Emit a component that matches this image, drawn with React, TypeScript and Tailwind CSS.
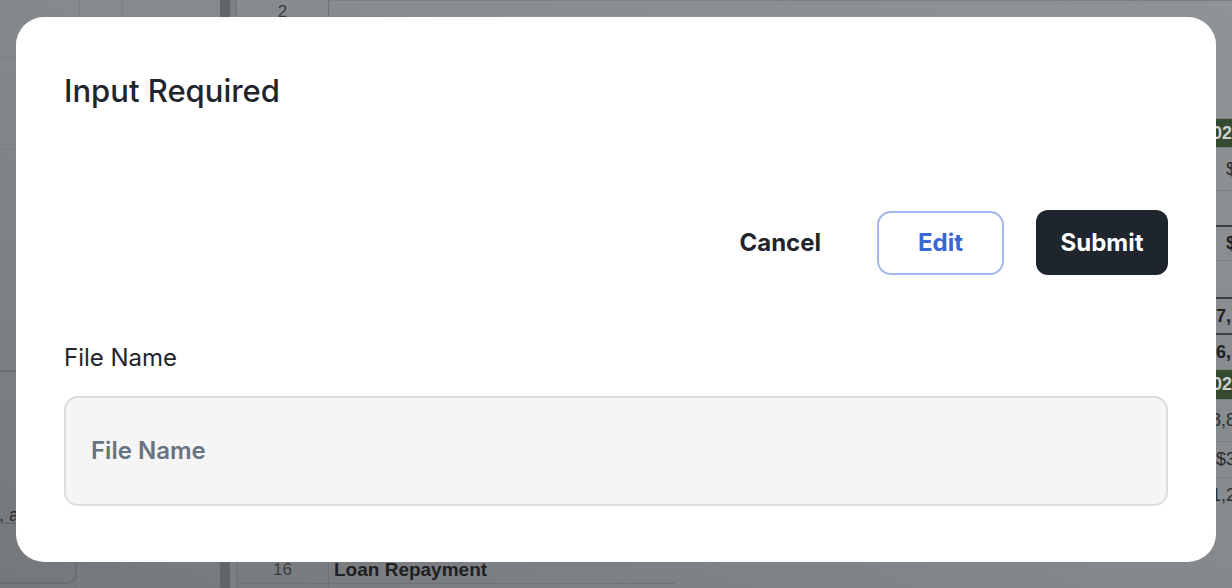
import React from "react";

const font = { fontFamily: "Inter, 'Noto Sans', sans-serif" };

function RightCells() {
  const rows: { h: number; text?: string; kind?: "green" | "bold" | "normal"; topLine?: boolean }[] = [
    { h: 118 },
    { h: 29, text: "2024", kind: "green" },
    { h: 43, text: "$", kind: "normal" },
    { h: 35 },
    { h: 35, text: "$", kind: "bold", topLine: true },
    { h: 37 },
    { h: 36, text: "17,", kind: "bold", topLine: true },
    { h: 36, text: "16,", kind: "bold", topLine: true },
    { h: 30, text: "2025", kind: "green" },
    { h: 42, text: "$8,8", kind: "normal" },
    { h: 36, text: "$3", kind: "normal" },
    { h: 35, text: "$1,2", kind: "normal" },
  ];
  return (
    <div className="flex flex-col w-full">
      {rows.map((r, i) => (
        <div
          key={i}
          className={`flex justify-end w-full ${r.topLine ? "border-t-2 border-[#3c3f42]" : "border-t border-[#7d8083]"}`}
          style={{ height: r.h }}
        >
          <div
            className={`w-[40px] flex items-center justify-end overflow-hidden whitespace-nowrap text-[18px] ${
              r.kind === "green"
                ? "bg-[#364a32] text-[#cfd2d4] font-bold"
                : r.kind === "bold"
                ? "text-[#1f2123] font-bold"
                : "text-[#2a2c2e]"
            }`}
            style={{ fontFamily: "'Liberation Sans', Arial, sans-serif" }}
          >
            <span className={r.kind === "green" ? "mr-[-10px]" : r.kind === "bold" && r.text !== "$" ? "mr-[1px]" : "mr-[-4px]"}>{r.text}</span>
          </div>
        </div>
      ))}
    </div>
  );
}

export default function App() {
  return (
    <div className="relative w-[1232px] h-[588px] overflow-hidden bg-gradient-to-tr from-[#75787b] via-[#86898c] to-[#909396]" style={font}>
      {/* Background spreadsheet (dimmed) */}
      <div className="flex h-full">
        <div className="w-[80px] h-full flex flex-col border-r border-[#7c7f82]">
          <div className="h-[58px] border-b border-[#7c7f82]" />
          <div className="h-[92px] border-b border-[#7c7f82]" />
          <div className="h-[42px] border-b border-[#7c7f82]" />
          <div className="h-[180px] border-b-2 border-[#6d7073]" />
          <div className="flex-1 relative">
            <div className="text-[18px] text-[#2b2d30] mt-[130px] -ml-[10px] whitespace-nowrap" style={{ fontFamily: "'Liberation Sans', Arial, sans-serif" }}>s, a</div>
            <div className="absolute left-[-10px] right-[2px] top-[150px] bottom-[4px] border-2 border-[#6b6e71] rounded-br-[10px]" />
          </div>
        </div>
        <div className="w-[43px] h-full border-r border-[#7c7f82]" />
        <div className="w-[97px] h-full" />
        <div className="w-[10px] h-full bg-[#626568]" />
        <div className="w-[6px] h-full bg-[#7d8083]" />
        <div className="w-[93px] h-full border-l border-r border-[#6f7275] flex flex-col text-[#3a3c3f] text-[17px]" style={{ fontFamily: "'Liberation Sans', Arial, sans-serif" }}>
          <div className="h-[24px] flex items-center justify-center">2</div>
          <div className="flex-1" />
          <div className="h-[28px] flex items-start justify-center pt-[1px] border-b border-[#6f7275] mb-[4px]">16</div>
        </div>
        <div className="flex-1 h-full flex flex-col">
          <RightCells />
          <div className="flex-1" />
          <div className="h-[32px] flex flex-col">
            <div className="w-[346px] border-b border-[#6f7275] h-[28px] pl-[5px] text-[19px] font-bold text-[#1e2022]" style={{ fontFamily: "'Liberation Sans', Arial, sans-serif" }}>
              Loan Repayment
            </div>
          </div>
        </div>
      </div>

      {/* Modal */}
      <div className="absolute left-[16px] top-[17px] w-[1200px] h-[545px] bg-white rounded-[28px] px-[48px] pt-[54px] flex flex-col">
        <h2 className="text-[31px] leading-[40px] font-medium text-[#1f252d]">Input Required</h2>
        <div className="flex justify-end items-center mt-[99px] gap-[32px]">
          <button className="h-[65px] px-[24px] text-[24px] font-bold text-[#1f252d]">Cancel</button>
          <button className="h-[64px] w-[127px] rounded-[14px] border-2 border-[#a3b8ea] text-[24px] font-bold text-[#3a67d2]">Edit</button>
          <button className="h-[65px] w-[132px] rounded-[12px] bg-[#1f252d] text-[24px] font-bold text-white">Submit</button>
        </div>
        <label className="mt-[68px] text-[24px] leading-[30px] text-[#1f252d]">File Name</label>
        <div className="mt-[23px] h-[110px] rounded-[14px] border-2 border-[#d9dce0] bg-[#f5f5f5] flex items-center px-[25px]">
          <span className="text-[24px] font-semibold text-[#667380]">File Name</span>
        </div>
      </div>
    </div>
  );
}
